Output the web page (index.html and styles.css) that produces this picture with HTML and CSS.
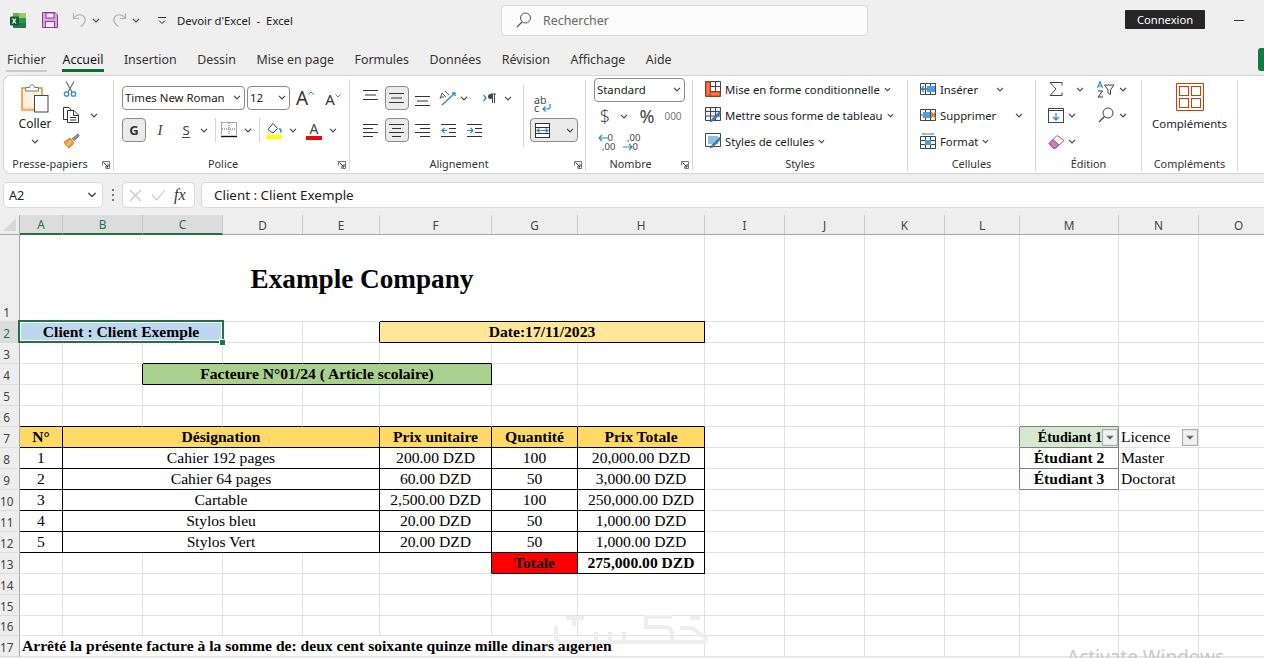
FILE: index.html
```html
<!DOCTYPE html>
<html lang="fr">
<head>
<meta charset="utf-8">
<title>Devoir d'Excel - Excel</title>
<link rel="stylesheet" href="styles.css">
</head>
<body>
<svg class="defs" width="0" height="0" aria-hidden="true">
  <symbol id="chev" viewBox="0 0 8 5"><path d="M1 .8 4 3.8 7 .8" fill="none" stroke="#444" stroke-width="1.2"/></symbol>
  <symbol id="launch" viewBox="0 0 8 8"><path d="M.5 4.5V.5H7.5V7.5H3.5" fill="none" stroke="#777"/><path d="M1.5 1.5 6 6M6 3V6H3" fill="none" stroke="#333"/></symbol>
  <symbol id="filter" viewBox="0 0 15 15" preserveAspectRatio="none"><rect x=".5" y=".5" width="14" height="14" fill="#f1f1f1" stroke="#a9abb0"/><path d="M4 6H11L7.5 9.5Z" fill="#666"/></symbol>
</svg>
<div class="app">
  <header class="titlebar">
    <div class="qat">
      <svg class="q-xl" width="16" height="17" viewBox="0 0 16 17"><rect x="3" y="1" width="13" height="15" rx="1" fill="#1f7a45"/><rect x="9" y="1" width="7" height="5" fill="#a6c85a"/><rect x="3" y="1" width="6" height="5" fill="#6cab4e"/><rect x="9" y="6" width="7" height="5" fill="#2f9257"/><rect y="4.500" width="9" height="9" rx="1" fill="#0f5c33"/><path d="M2.500 6.500 6 11.500M6 6.500 2.500 11.500" stroke="#fff" stroke-width="1.300"/></svg>
      <svg class="q-save" width="16" height="16" viewBox="0 0 16 16"><path d="M.5.500H13L15.500 3V15.500H.5Z" fill="#d9a6d8" stroke="#8e3b8d"/><rect x="4" y="1" width="8" height="5" fill="#f7e9f7" stroke="#8e3b8d"/><rect x="3.500" y="9.500" width="9" height="6" fill="#f7e9f7" stroke="#8e3b8d"/></svg>
      <svg class="q-undo" width="15" height="16" viewBox="0 0 15 16"><path d="M1.500 1V6.500H7M1.800 6.300C4 2.500 9 1.500 12 4.500 14.500 7.500 13 11.500 8.500 14.500" fill="none" stroke="#b2b2b2" stroke-width="1.200"/></svg>
      <svg class="q-ch" width="8" height="5"><use href="#chev"/></svg>
      <svg class="q-redo" width="15" height="16" viewBox="0 0 15 16"><path d="M13.500 1V6.500H8M13.200 6.300C11 2.500 6 1.500 3 4.500 .5 7.500 2 11.500 6.500 14.500" fill="none" stroke="#b2b2b2" stroke-width="1.200"/></svg>
      <svg class="q-ch" width="8" height="5"><use href="#chev"/></svg>
      <svg class="q-cust" width="8" height="7" viewBox="0 0 8 7"><path d="M0 .5H8M1 3.500 4 6.500 7 3.500" fill="none" stroke="#333"/></svg>
      <span class="doc">Devoir d'Excel&nbsp; -&nbsp; Excel</span>
    </div>
    <div class="search">
      <svg width="16" height="16" viewBox="0 0 16 16"><circle cx="9.500" cy="6" r="5" fill="none" stroke="#555"/><path d="M6 10 1 15" stroke="#555" stroke-width="1.200"/></svg>
      <span>Rechercher</span>
    </div>
    <button class="login">Connexion</button>
    <span class="minimize"></span>
  </header>

  <nav class="tabs">
    <span class="tab file">Fichier</span>
    <span class="tab active">Accueil</span>
    <span class="tab">Insertion</span>
    <span class="tab">Dessin</span>
    <span class="tab">Mise en page</span>
    <span class="tab">Formules</span>
    <span class="tab">Données</span>
    <span class="tab">Révision</span>
    <span class="tab">Affichage</span>
    <span class="tab">Aide</span>
    <span class="share"></span>
  </nav>

  <section class="ribbon">
    <div class="group g1 launchable">
      <div class="body clip">
        <div class="paste">
          <svg width="28" height="30" viewBox="0 0 28 30"><path d="M4 5H1V27H21V5H18" fill="#fdf1df" stroke="#e8912c" stroke-width="1.500"/><path d="M1 26.500H21" stroke="#f2b163" stroke-width="2"/><path d="M4.500 8V4.500H8.500C9 .5 13 .5 13.500 4.500H17.500V8Z" fill="#fff" stroke="#777"/><rect x="13.500" y="12.500" width="13.500" height="16.500" fill="#fff" stroke="#444"/></svg>
          <span>Coller</span>
          <svg width="8" height="5"><use href="#chev"/></svg>
        </div>
        <div class="clipcol">
          <svg width="14" height="16" viewBox="0 0 14 16"><path d="M3 .5 9 11M11 .5 5 11" fill="none" stroke="#666" stroke-width="1.100"/><circle cx="3.500" cy="13" r="2.200" fill="none" stroke="#2b88d8" stroke-width="1.300"/><circle cx="10.500" cy="13" r="2.200" fill="none" stroke="#2b88d8" stroke-width="1.300"/></svg>
          <div class="copyrow">
            <svg width="16" height="16" viewBox="0 0 16 16"><path d="M5 12.500H.5V.5H6L8 3" fill="none" stroke="#333"/><path d="M4.500 3.500H11L15.500 8V15.500H4.500Z" fill="#fff" stroke="#333"/><path d="M10.500 3.500V8.500H15.500M7 10.500H13M7 13H13" fill="none" stroke="#333"/></svg>
            <svg width="8" height="5"><use href="#chev"/></svg>
          </div>
          <svg width="17" height="16" viewBox="0 0 17 16"><path d="M1 9 7 5 11 10 6 15C4 14 2 11 1 9Z" fill="#f2a33a" stroke="#d97e1c"/><path d="M4 12 8 8" stroke="#fff"/><path d="M9 6 15 1 16 2.500 11 8" fill="#9a9a9a" stroke="#666"/></svg>
        </div>
      </div>
      <div class="label">Presse-papiers</div>
      <svg class="launcher" width="8" height="8"><use href="#launch"/></svg>
    </div>

    <div class="group g2 launchable">
      <div class="body stack">
        <div class="row pol1">
          <div class="select"><span class="tnr">Times New Roman</span><svg width="8" height="5"><use href="#chev"/></svg></div>
          <div class="select"><span>12</span><svg width="8" height="5"><use href="#chev"/></svg></div>
          <span class="fontA big">A<svg width="6" height="4" viewBox="0 0 6 4"><path d="M.5 3.500 3 1 5.500 3.500" fill="none" stroke="#2b88d8"/></svg></span>
          <span class="fontA small">A<svg width="6" height="4" viewBox="0 0 6 4"><path d="M.5.500 3 3 5.500.5" fill="none" stroke="#2b88d8"/></svg></span>
        </div>
        <div class="row pol2">
          <span class="btn bold-g">G</span>
          <span class="txt-i">I</span>
          <span class="txt-s">S</span>
          <svg width="8" height="5"><use href="#chev"/></svg>
          <span class="vsep"></span>
          <svg width="16" height="16" viewBox="0 0 16 16"><path d="M.5.500H15.500V13M.5.500V13M8 1V13M1 7H15" fill="none" stroke="#555" stroke-dasharray="1 1"/><path d="M0 14.500H16" stroke="#111" stroke-width="1.400"/></svg>
          <svg width="8" height="5"><use href="#chev"/></svg>
          <span class="vsep"></span>
          <svg width="16" height="17" viewBox="0 0 16 17"><path d="M2 7.500 7 1.500 11.500 6.500 7 11Z" fill="#fff" stroke="#444"/><path d="M13 6.500C15 7 15.500 9 14.500 10.500" fill="none" stroke="#2b88d8" stroke-width="1.500"/><rect y="13" width="16" height="4" fill="#ffff00"/></svg>
          <svg width="8" height="5"><use href="#chev"/></svg>
          <span class="color-a">A</span>
          <svg width="8" height="5"><use href="#chev"/></svg>
        </div>
      </div>
      <div class="label">Police</div>
      <svg class="launcher" width="8" height="8"><use href="#launch"/></svg>
    </div>

    <div class="group g3 launchable">
      <div class="body al">
        <div class="stack al-left">
          <div class="row al1">
            <svg class="lines up" width="15" height="11" viewBox="0 0 15 11"><path d="M0 .5H15M2 5H13M0 9.500H15" stroke="#333"/></svg>
            <span class="btn"><svg width="15" height="11" viewBox="0 0 15 11"><path d="M0 .5H15M2 5H13M0 9.500H15" stroke="#333"/></svg></span>
            <svg class="lines down" width="15" height="11" viewBox="0 0 15 11"><path d="M0 .5H15M2 5H13M0 9.500H15" stroke="#333"/></svg>
            <svg width="18" height="16" viewBox="0 0 18 16"><path d="M3 15 16 3M13 3H16V6" fill="none" stroke="#2b88d8" stroke-width="1.300"/><path d="M1 9 3 3 7 7 M2 7H5M6 1 10 5" fill="none" stroke="#555"/></svg>
            <svg width="8" height="5"><use href="#chev"/></svg>
            <i></i>
            <svg width="14" height="11" viewBox="0 0 14 11"><path d="M.5 2 3 5 .5 8" fill="none" stroke="#2b88d8" stroke-width="1.300"/><path d="M8 1H13M9.500 1V10M11.500 1V10" fill="none" stroke="#444"/><circle cx="7.500" cy="3.500" r="2.500" fill="#444"/></svg>
            <svg width="8" height="5"><use href="#chev"/></svg>
          </div>
          <div class="row al2">
            <svg width="15" height="13" viewBox="0 0 15 13"><path d="M0 .5H15M0 4.500H10M0 8.500H15M0 12.500H10" stroke="#333"/></svg>
            <span class="btn"><svg width="15" height="13" viewBox="0 0 15 13"><path d="M0 .5H15M3 4.500H12M0 8.500H15M3 12.500H12" stroke="#333"/></svg></span>
            <svg width="15" height="13" viewBox="0 0 15 13"><path d="M0 .5H15M5 4.500H15M0 8.500H15M5 12.500H15" stroke="#333"/></svg>
            <svg width="15" height="13" viewBox="0 0 15 13"><path d="M0 .5H15M8 4.500H15M8 8.500H15M0 12.500H15" stroke="#333"/><path d="M6 6.500H1M3.500 4 1 6.500 3.500 9" fill="none" stroke="#2b88d8" stroke-width="1.200"/></svg>
            <svg width="15" height="13" viewBox="0 0 15 13"><path d="M0 .5H15M8 4.500H15M8 8.500H15M0 12.500H15" stroke="#333"/><path d="M0 6.500H6M3.500 4 6 6.500 3.500 9" fill="none" stroke="#2b88d8" stroke-width="1.200"/></svg>
          </div>
        </div>
        <span class="tallsep"></span>
        <div class="al-right">
          <div class="wrapicon">
            <span class="abc">ab<br>c</span>
            <svg width="9" height="8" viewBox="0 0 9 8"><path d="M8 0V3C8 4.500 7 5 5.500 5H1M3.500 2.500 1 5 3.500 7.500" fill="none" stroke="#2b88d8" stroke-width="1.200"/></svg>
          </div>
          <div class="btn merge">
            <svg width="15" height="15" viewBox="0 0 15 15"><rect x=".5" y=".5" width="14" height="14" fill="#fff" stroke="#333"/><path d="M0 4.500H15M0 10.500H15" stroke="#333"/><path d="M2 7.500H13M4.500 5.500 2 7.500 4.500 9.500M10.500 5.500 13 7.500 10.500 9.500" fill="none" stroke="#2b88d8" stroke-width="1.100"/></svg>
            <svg width="8" height="5"><use href="#chev"/></svg>
          </div>
        </div>
      </div>
      <div class="label">Alignement</div>
      <svg class="launcher" width="8" height="8"><use href="#launch"/></svg>
    </div>

    <div class="group g4 launchable">
      <div class="body num">
        <div class="select std"><span>Standard</span><svg width="8" height="5"><use href="#chev"/></svg></div>
        <div class="row num1">
          <span class="dollar">$</span>
          <svg width="8" height="5"><use href="#chev"/></svg>
          <span class="pct">%</span>
          <span class="thou">000</span>
        </div>
        <div class="row num2">
          <span class="dec"><svg width="10" height="8" viewBox="0 0 10 8"><path d="M10 4H1M4 1 1 4 4 7" fill="none" stroke="#2b88d8" stroke-width="1.200"/></svg><b>0</b><em>,00</em></span>
          <span class="dec"><em class="lead">,00</em><svg width="10" height="8" viewBox="0 0 10 8"><path d="M0 4H9M6 1 9 4 6 7" fill="none" stroke="#2b88d8" stroke-width="1.200"/></svg><b>0</b></span>
        </div>
      </div>
      <div class="label">Nombre</div>
      <svg class="launcher" width="8" height="8"><use href="#launch"/></svg>
    </div>

    <div class="group g5">
      <div class="body list">
        <div class="item">
          <svg width="16" height="16" viewBox="0 0 16 16"><path d="M.5.500H15.500V15.500H.5ZM.5 5.500H15.500M.5 10.500H15.500M5.500.5V15.500M10.500.5V15.500" fill="#fff" stroke="#444"/><path d="M1 1H5V15H15V11H5V15" fill="#f47a5c"/><path d="M1 1H5V15H1ZM5 11H15V15H5Z" fill="#f47a5c" stroke="#d83b01"/></svg>
          <span>Mise en forme conditionnelle</span><svg width="7" height="5"><use href="#chev"/></svg>
        </div>
        <div class="item">
          <svg width="16" height="16" viewBox="0 0 16 16"><path d="M.5.500H15.500V13.500H.5ZM.5 4.500H15.500M.5 9H15.500M5.500.5V13.500M10.500.5V13.500" fill="#eaf3fb" stroke="#444"/><path d="M15 4 7 12 5 15 8 14 16 6Z" fill="#2b88d8" stroke="#555" stroke-width=".6"/></svg>
          <span>Mettre sous forme de tableau</span><svg width="7" height="5"><use href="#chev"/></svg>
        </div>
        <div class="item">
          <svg width="16" height="16" viewBox="0 0 16 16"><path d="M.5.500H15.500V13.500H.5Z" fill="#fff" stroke="#444"/><rect x="3" y="3" width="10" height="8" fill="#8cc0ec"/><path d="M15 4 7 12 5 15 8 14 16 6Z" fill="#2b88d8" stroke="#555" stroke-width=".6"/></svg>
          <span>Styles de cellules</span><svg width="7" height="5"><use href="#chev"/></svg>
        </div>
      </div>
      <div class="label">Styles</div>
    </div>

    <div class="group g6">
      <div class="body list">
        <div class="item">
          <svg width="16" height="16" viewBox="0 0 16 16"><path d="M.5 2.500H15.500V13.500H.5ZM.5 8H15.500M5.500 2.500V13.500M10.500 2.500V13.500" fill="#fff" stroke="#444"/><rect x="7" y="5" width="8" height="6" fill="#4a9fe0"/><path d="M8 8H1M4 5 1 8 4 11" fill="none" stroke="#2b88d8" stroke-width="1.300"/></svg>
          <span class="w-ins">Insérer</span><svg width="8" height="5"><use href="#chev"/></svg>
        </div>
        <div class="item">
          <svg width="16" height="16" viewBox="0 0 16 16"><path d="M.5 2.500H15.500V13.500H.5ZM.5 8H15.500M5.500 2.500V13.500M10.500 2.500V13.500" fill="#fff" stroke="#444"/><rect x="3" y="5" width="7" height="6" fill="#4a9fe0"/><path d="M11 5 15.500 11M15.500 5 11 11" stroke="#e8702a" stroke-width="1.300"/></svg>
          <span class="w-sup">Supprimer</span><svg width="8" height="5"><use href="#chev"/></svg>
        </div>
        <div class="item">
          <svg width="16" height="16" viewBox="0 0 16 16"><path d="M.5 3.500H15.500V15.500H.5ZM.5 7.500H15.500M.5 11.500H15.500M5.500 3.500V15.500M10.500 3.500V15.500" fill="#fff" stroke="#444"/><rect x="5" y="7" width="6" height="5" fill="#4a9fe0"/><path d="M3 1H13M3 0V2M13 0V2" stroke="#2b88d8"/></svg>
          <span>Format</span><svg width="7" height="5"><use href="#chev"/></svg>
        </div>
      </div>
      <div class="label">Cellules</div>
    </div>

    <div class="group g7">
      <div class="body list edit">
        <div class="row ed1">
          <svg width="14" height="14" viewBox="0 0 14 14"><path d="M13 3.500V.5H1L7 7 1 13.500H13V10.500" fill="none" stroke="#444"/></svg>
          <svg width="8" height="5"><use href="#chev"/></svg>
          <svg width="18" height="17" viewBox="0 0 18 17"><path d="M.5 7 3 .5 5.500 7M1.500 5H4.500" fill="none" stroke="#2b88d8" stroke-width="1.100"/><path d="M1 10H5.500L1 16H6" fill="none" stroke="#333"/><path d="M7.500 4H17L13.500 9V13.500L11 12V9Z" fill="#fff" stroke="#444"/></svg>
          <svg width="8" height="5"><use href="#chev"/></svg>
        </div>
        <div class="row ed2">
          <svg width="16" height="15" viewBox="0 0 16 15"><rect x=".5" y=".5" width="15" height="14" fill="#fff" stroke="#444"/><path d="M.5 2.500H15.500" stroke="#444"/><path d="M8 5V12M5 9 8 12 11 9" fill="none" stroke="#2b88d8" stroke-width="1.300"/></svg>
          <svg width="8" height="5"><use href="#chev"/></svg>
          <i></i>
          <svg width="16" height="16" viewBox="0 0 16 16"><circle cx="10" cy="6" r="5" fill="#fff" stroke="#444"/><path d="M6.500 9.500 1 15" stroke="#444" stroke-width="1.300"/></svg>
          <svg width="8" height="5"><use href="#chev"/></svg>
        </div>
        <div class="row ed3">
          <svg width="17" height="15" viewBox="0 0 17 15"><path d="M1 9.500 9 1.500 16 6.500 8 14H5Z" fill="#fff" stroke="#a24ba0"/><path d="M1 9.500 5 5.500 11 11 8 14H5Z" fill="#c77cc6" stroke="#a24ba0"/></svg>
          <svg width="8" height="5"><use href="#chev"/></svg>
        </div>
      </div>
      <div class="label">Édition</div>
    </div>

    <div class="group g8">
      <div class="body addin">
        <svg width="28" height="28" viewBox="0 0 28 28"><path d="M.5.500H27.500V27.500H.5Z" fill="#fff" stroke="#d83b01"/><rect x="3.500" y="3.500" width="9" height="9" fill="none" stroke="#d83b01"/><rect x="15.500" y="3.500" width="9" height="9" fill="none" stroke="#d83b01"/><rect x="3.500" y="15.500" width="9" height="9" fill="none" stroke="#d83b01"/><rect x="15.500" y="15.500" width="9" height="9" fill="none" stroke="#d83b01"/></svg>
        <span>Compléments</span>
      </div>
      <div class="label">Compléments</div>
    </div>
  </section>

  <section class="formula">
    <div class="namebox"><span>A2</span><svg width="10" height="6"><use href="#chev"/></svg></div>
    <span class="dots"></span>
    <div class="fxbox">
      <svg width="13" height="13" viewBox="0 0 13 13"><path d="M1 1 12 12M12 1 1 12" stroke="#c4c4c4" stroke-width="1.100"/></svg>
      <svg width="15" height="12" viewBox="0 0 15 12"><path d="M1 6 5.500 11 14 1" fill="none" stroke="#c4c4c4" stroke-width="1.100"/></svg>
      <span class="fx">fx</span>
    </div>
    <div class="input">Client : Client Exemple</div>
  </section>

  <table class="sheet">
    <colgroup>
      <col class="c-h"><col class="c-a"><col class="c-80"><col class="c-80"><col class="c-80"><col class="c-e"><col class="c-f"><col class="c-g"><col class="c-k"><col class="c-80"><col class="c-80"><col class="c-80"><col class="c-l"><col class="c-m"><col class="c-80"><col class="c-80">
    </colgroup>
    <thead>
      <tr>
        <th class="corner"><svg width="13" height="13" viewBox="0 0 13 13"><path d="M13 0V13H0Z" fill="#d8d8d8"/></svg></th>
        <th class="on">A</th><th class="on">B</th><th class="on">C</th><th>D</th><th>E</th><th>F</th><th>G</th><th>H</th><th>I</th><th>J</th><th>K</th><th>L</th><th>M</th><th>N</th><th>O</th>
      </tr>
    </thead>
    <tbody>
      <tr class="r1"><th>1</th><td colspan="8" class="title">Example Company</td><td></td><td></td><td></td><td></td><td></td><td></td><td></td></tr>
      <tr><th class="on">2</th><td colspan="3" class="sel b ctr">Client : Client Exemple</td><td></td><td class="kr"></td><td colspan="3" class="date b ctr kr kb">Date:17/11/2023</td><td></td><td></td><td></td><td></td><td></td><td></td><td></td></tr>
      <tr><th>3</th><td></td><td></td><td class="kb"></td><td class="kb"></td><td class="kb"></td><td class="kb"></td><td></td><td></td><td></td><td></td><td></td><td></td><td></td><td></td><td></td></tr>
      <tr><th>4</th><td></td><td class="kr"></td><td colspan="4" class="fact b ctr kr kb">Facteure N°01/24 ( Article scolaire)</td><td></td><td></td><td></td><td></td><td></td><td></td><td></td><td></td><td></td></tr>
      <tr><th>5</th><td></td><td></td><td></td><td></td><td></td><td></td><td></td><td></td><td></td><td></td><td></td><td></td><td></td><td></td><td></td></tr>
      <tr><th>6</th><td class="kb"></td><td class="kb"></td><td class="kb"></td><td class="kb"></td><td class="kb"></td><td class="kb"></td><td class="kb"></td><td class="kb"></td><td></td><td></td><td></td><td></td><td class="gb"></td><td></td><td></td></tr>
      <tr class="headrow"><th>7</th><td class="hd kr kb">N°</td><td colspan="4" class="hd kr kb">Désignation</td><td class="hd kr kb">Prix unitaire</td><td class="hd kr kb">Quantité</td><td class="hd kr kb">Prix Totale</td><td></td><td></td><td></td><td class="gr"></td><td class="stu1 gr gb"><span>Étudiant 1</span><svg class="fbtn" width="16" height="17"><use href="#filter"/></svg></td><td class="lic">Licence<svg class="fbtn" width="16" height="17"><use href="#filter"/></svg></td><td></td></tr>
      <tr><th>8</th><td class="ctr kr kb">1</td><td colspan="4" class="ctr kr kb">Cahier 192 pages</td><td class="ctr kr kb">200.00 DZD</td><td class="ctr kr kb">100</td><td class="ctr kr kb">20,000.00 DZD</td><td></td><td></td><td></td><td class="gr"></td><td class="b ctr gr gb">Étudiant 2</td><td>Master</td><td></td></tr>
      <tr><th>9</th><td class="ctr kr kb">2</td><td colspan="4" class="ctr kr kb">Cahier 64 pages</td><td class="ctr kr kb">60.00 DZD</td><td class="ctr kr kb">50</td><td class="ctr kr kb">3,000.00 DZD</td><td></td><td></td><td></td><td class="gr"></td><td class="b ctr gr gb">Étudiant 3</td><td>Doctorat</td><td></td></tr>
      <tr><th>10</th><td class="ctr kr kb">3</td><td colspan="4" class="ctr kr kb">Cartable</td><td class="ctr kr kb">2,500.00 DZD</td><td class="ctr kr kb">100</td><td class="ctr kr kb">250,000.00 DZD</td><td></td><td></td><td></td><td></td><td></td><td></td><td></td></tr>
      <tr><th>11</th><td class="ctr kr kb">4</td><td colspan="4" class="ctr kr kb">Stylos bleu</td><td class="ctr kr kb">20.00 DZD</td><td class="ctr kr kb">50</td><td class="ctr kr kb">1,000.00 DZD</td><td></td><td></td><td></td><td></td><td></td><td></td><td></td></tr>
      <tr><th>12</th><td class="ctr kr kb">5</td><td colspan="4" class="ctr kr kb">Stylos Vert</td><td class="ctr kr kb">20.00 DZD</td><td class="ctr kr kb">50</td><td class="ctr kr kb">1,000.00 DZD</td><td></td><td></td><td></td><td></td><td></td><td></td><td></td></tr>
      <tr><th>13</th><td></td><td></td><td></td><td></td><td></td><td class="kr"></td><td class="total b ctr kr kb">Totale</td><td class="b ctr kr kb">275,000.00 DZD</td><td></td><td></td><td></td><td></td><td></td><td></td><td></td></tr>
      <tr><th>14</th><td></td><td></td><td></td><td></td><td></td><td></td><td></td><td></td><td></td><td></td><td></td><td></td><td></td><td></td><td></td></tr>
      <tr><th>15</th><td></td><td></td><td></td><td></td><td></td><td></td><td></td><td></td><td></td><td></td><td></td><td></td><td></td><td></td><td></td></tr>
      <tr class="r16"><th>16</th><td></td><td></td><td></td><td></td><td></td><td></td><td></td><td></td><td></td><td></td><td></td><td></td><td></td><td></td><td></td></tr>
      <tr><th>17</th><td colspan="8" class="b">Arrêté la présente facture à la somme de: deux cent soixante quinze mille dinars algérien</td><td></td><td></td><td></td><td></td><td></td><td></td><td></td></tr>
    </tbody>
  </table>

  <svg class="watermark" width="154" height="32" viewBox="0 0 154 32"><path d="M2 12V22Q2 28 9 28H148Q152 28 152 24L138 14H126M12 4H30M20 4V12M42 28V18M56 28V18M70 28V18M118 3H92V13H110Q118 13 118 20V28M136 4H146" fill="none" stroke="#eeeeee" stroke-width="4"/></svg>
  <div class="activate">Activate Windows</div>
</div>
</body>
</html>
```
FILE: styles.css
```css
* { box-sizing: border-box; }
html, body { margin: 0; height: 100%; overflow: hidden; }
body { background: #efefef; font-family: "Noto Sans", sans-serif; font-size: 11.3px; color: #222; }
svg { display: block; flex: none; }
.defs { position: absolute; }
.app { position: relative; width: 1264px; height: 658px; overflow: hidden; }
i { display: block; }

/* title bar */
.titlebar { height: 44px; display: flex; align-items: center; padding-left: 10px; }
.qat { width: 491px; margin-top: -4px; display: flex; align-items: center; }
.q-save { margin-left: 16px; }
.q-undo { margin-left: 14px; }
.q-ch { margin-left: 5px; }
.q-redo { margin-left: 12px; }
.q-cust { margin-left: 18px; }
.doc { margin-left: 11px; font-size: 11.3px; color: #222; }
.search { width: 367px; height: 31px; margin-top: -4px; display: flex; align-items: center; gap: 11px; padding-left: 14px; background: #fbfbfb; border: 1px solid #d9d9d9; border-radius: 4px; font-size: 12.4px; color: #666; }
.login { width: 80px; height: 19px; margin: -5px 0 0 257px; padding: 0; border: 0; border-radius: 1px; background: #262626; color: #fff; font: 11.2px "Noto Sans", sans-serif; }
.minimize { width: 10px; height: 1px; margin: -4px 0 0 29px; background: #333; }

/* tabs */
.tabs { height: 31px; display: flex; align-items: flex-start; padding-left: 6px; gap: 18.5px; font-size: 12.4px; color: #333; }
.tab { height: 28px; padding: 7px 1px 0; line-height: 17px; }
.tab.file { border-bottom: 2px solid #c9c9c9; margin-right: -3.5px; }
.tab.active { border-bottom: 3px solid #0f6b3a; color: #111; }
.share { width: 6px; height: 23px; margin: 4px 0 0 auto; border-radius: 3px 0 0 3px; background: #107c41; }

/* ribbon */
.ribbon { height: 99px; margin-left: 3px; padding-top: 4px; display: flex; background: #fff; border: 1px solid #d4d4d4; border-right: 0; border-radius: 8px 0 0 8px; }
.group { position: relative; height: 91px; display: flex; flex-direction: column; border-right: 1px solid #d6d6d6; flex: none; }
.body { flex: 1; min-height: 0; }
.label { height: 14px; line-height: 14px; text-align: center; font-size: 10.9px; color: #333; }
.launchable .label { padding-right: 17px; }
.launcher { position: absolute; right: 3px; bottom: 2px; }
.g1 { width: 110px; }
.g2, .g3 { width: 236px; }
.g4 { width: 107px; }
.g5 { width: 215px; }
.g6 { width: 128px; }
.g7 { width: 106px; }
.g8 { width: 96px; }
.row { display: grid; justify-items: center; align-items: center; height: 24px; }
.stack { display: flex; flex-direction: column; gap: 8px; padding-top: 6px; }
.btn { display: flex; align-items: center; justify-content: center; width: 24px; height: 24px; background: #ebebeb; border: 1px solid #8a8a8a; border-radius: 4px; }
.select { width: 100%; height: 24px; display: flex; align-items: center; justify-content: space-between; padding: 0 3px 1px 2px; background: #fff; border: 1px solid #8a8a8a; border-radius: 4px; font-size: 11.4px; }
.vsep { width: 1px; height: 24px; background: #d6d6d6; }

/* presse-papiers */
.clip { display: flex; padding-left: 10px; }
.paste { width: 42px; display: flex; flex-direction: column; align-items: center; padding-top: 3px; }
.paste span { margin-top: 2px; line-height: 18px; font-size: 12px; }
.paste svg:last-child { margin-top: 6px; }
.clipcol { width: 42px; margin: -1px 0 0 5px; display: flex; flex-direction: column; gap: 10px; padding: 2px 0 0 2px; }
.copyrow { display: flex; align-items: center; gap: 11px; }

/* police */
.g2 .body { padding-left: 8px; }
.pol1 { grid-template-columns: 123px 43px 26px 26px; column-gap: 2px; justify-content: start; }
.pol2 { grid-template-columns: 24px 28px 24px 12px 10px 18px 20px 2px 28px 10px 32px 6px; justify-content: start; }
.tnr { font-size: 11.4px; }
.fontA { display: flex; color: #333; line-height: 1; }
.fontA.big { font-size: 19px; }
.fontA.small { font-size: 15px; align-items: flex-start; padding-top: 3px; }
.fontA svg { margin-top: 2px; }
.bold-g { font-weight: 700; font-size: 13px; color: #333; }
.txt-i { font: italic 15px "Liberation Serif", serif; color: #444; }
.txt-s { font-size: 13px; color: #444; border-bottom: 1px solid #444; line-height: 14px; }
.color-a { font-size: 14px; line-height: 15px; width: 16px; text-align: center; color: #444; border-bottom: 4px solid #ff0000; }

/* alignement */
.al { display: flex; padding-left: 7px; }
.al-left { width: 166px; }
.al1 { grid-template-columns: 27px 25px 26px 26px 6px 11px 24px 12px; justify-content: start; }
.al2 { grid-template-columns: 27px 25px 26px 26px 26px; justify-content: start; }
.lines.up { margin-top: -6px; }
.lines.down { margin-top: 6px; }
.tallsep { width: 1px; height: 62px; margin-top: 5px; background: #d6d6d6; }
.al-right { padding: 4px 0 0 6px; }
.wrapicon { width: 48px; height: 34px; display: flex; align-items: flex-end; padding: 0 0 6px 4px; }
.abc { font-size: 10.5px; line-height: 8px; color: #444; }
.wrapicon svg { margin: 0 0 0 -4px; }
.merge { width: 48px; justify-content: flex-start; gap: 16px; padding-left: 4px; }

/* nombre */
.num { padding-left: 8px; }
.select.std { width: 91px; margin-top: -2px; }
.num1 { grid-template-columns: 22px 16px 30px 22px; justify-content: start; margin-top: 1px; height: 26px; }
.num2 { grid-template-columns: 25px 25px; justify-content: start; height: 26px; }
.dollar { font-size: 18px; color: #444; font-weight: 300; }
.pct { font-size: 18px; color: #444; }
.thou { font-size: 10px; color: #777; }
.dec { display: grid; grid-template-columns: 10px 8px; line-height: 9px; font-size: 9.5px; color: #444; align-items: center; }
.dec b { font-weight: 400; }
.dec em { font-style: normal; grid-column: 1 / 3; text-align: right; }

/* listes */
.list { margin-top: -4px; padding-left: 12px; }
.item { height: 26px; display: flex; align-items: center; gap: 4px; white-space: nowrap; }
.w-ins { width: 52px; }
.w-sup { width: 71px; }
.edit { padding-left: 10px; }
.edit .row { height: 26px; }
.ed1 { grid-template-columns: 20px 28px 24px 10px; justify-content: start; }
.ed2 { grid-template-columns: 20px 12px 16px 24px 10px; justify-content: start; }
.ed3 { grid-template-columns: 20px 12px; justify-content: start; }
.addin { display: flex; flex-direction: column; align-items: center; padding-top: 3px; }
.addin span { margin-top: 3px; line-height: 20px; font-size: 11.4px; }

/* formula bar */
.formula { height: 41px; padding-top: 8px; margin-left: 3px; display: flex; }
.namebox, .fxbox, .input { height: 26px; background: #fff; border: 1px solid #d9d9d9; border-radius: 5px; display: flex; align-items: center; }
.namebox { width: 100px; padding: 0 5px; justify-content: space-between; font-size: 12.6px; }
.dots { width: 2px; height: 12px; margin: 7px 8px 0 9px; background: repeating-linear-gradient(#777 0 2px, transparent 2px 5px); }
.fxbox { width: 73px; padding-left: 6px; gap: 9px; }
.fx { font: italic 16px "Liberation Serif", serif; color: #333; margin-left: -1px; }
.input { flex: 1; margin-left: 6px; padding-left: 12px; font-size: 13.4px; border-right: 0; border-radius: 5px 0 0 5px; }

/* feuille */
.sheet { width: 1279px; table-layout: fixed; border-collapse: separate; border-spacing: 0; background: #fff; font: 15.6px/18px "Liberation Serif", serif; color: #000; }
.c-h { width: 20px; } .c-a { width: 43px; } .c-80 { width: 80px; } .c-e { width: 77px; } .c-f { width: 112px; } .c-g { width: 86px; } .c-k { width: 127px; } .c-l { width: 75px; } .c-m { width: 99px; }
.sheet th { padding: 0; font: 400 11.8px/14px "Noto Sans", sans-serif; color: #444; background: #eee; border-right: 1px solid #c8c8c8; border-bottom: 1px solid #a8a8a8; }
.sheet thead th { height: 20px; }
.sheet thead th.on { background: #dcdcdc; color: #217346; border-bottom: 2px solid #217346; }
.sheet thead th.corner { padding-left: 3px; border-right: 1px solid #a8a8a8; }
.sheet tbody th { border-bottom: 1px solid #dcdcdc; border-right: 1px solid #a8a8a8; vertical-align: bottom; padding: 0 6px 2px 0; text-align: center; white-space: nowrap; }
.sheet tbody th.on { background: #dcdcdc; color: #217346; }
.sheet tbody tr { height: 21px; }
.sheet tbody tr.r1 { height: 87px; }
.sheet tbody tr.r16 { height: 20px; }
.sheet td { padding: 0 2px 1px; border-right: 1px solid #e2e2e2; border-bottom: 1px solid #e2e2e2; vertical-align: bottom; white-space: nowrap; position: relative; }
.sheet td.kr { border-right-color: #000; }
.sheet td.kb { border-bottom-color: #000; }
.sheet td.gr { border-right-color: #7f7f7f; }
.sheet td.gb { border-bottom-color: #7f7f7f; }
.b { font-weight: 700; }
.sheet .ctr { text-align: center; }
.sheet td.title { padding-top: 2px; font-size: 27.2px; line-height: 32px; font-weight: 700; text-align: center; vertical-align: middle; }
.sheet td.date { background: #ffe699; box-shadow: 0 -1px 0 #000; }
.sheet td.fact { background: #a9d08e; }
.sheet td.hd { background: #ffd966; font-weight: 700; text-align: center; }
.sheet td.total { background: #ff0000; }
.sheet td.sel { background: #bdd7ee; }
.sel::after { content: ""; position: absolute; inset: -2px -2px -1px -2px; border: 2px solid #217346; box-shadow: inset 0 0 0 1px #fff; }
.sel::before { content: ""; position: absolute; right: -3px; bottom: -3px; z-index: 1; width: 5px; height: 5px; background: #217346; outline: 1px solid #fff; }
.sheet td.stu1 { background: #d5e8d0; text-align: center; font-weight: 700; font-size: 14.2px; padding-right: 0; }
.stu1 span { display: block; }
.fbtn { position: absolute; right: 0; bottom: 1px; }
.watermark { position: absolute; left: 554px; top: 614px; }
.activate { position: absolute; left: 1067px; top: 644px; font: 19px "Noto Sans", sans-serif; color: #c9c9c9; white-space: nowrap; }
```
